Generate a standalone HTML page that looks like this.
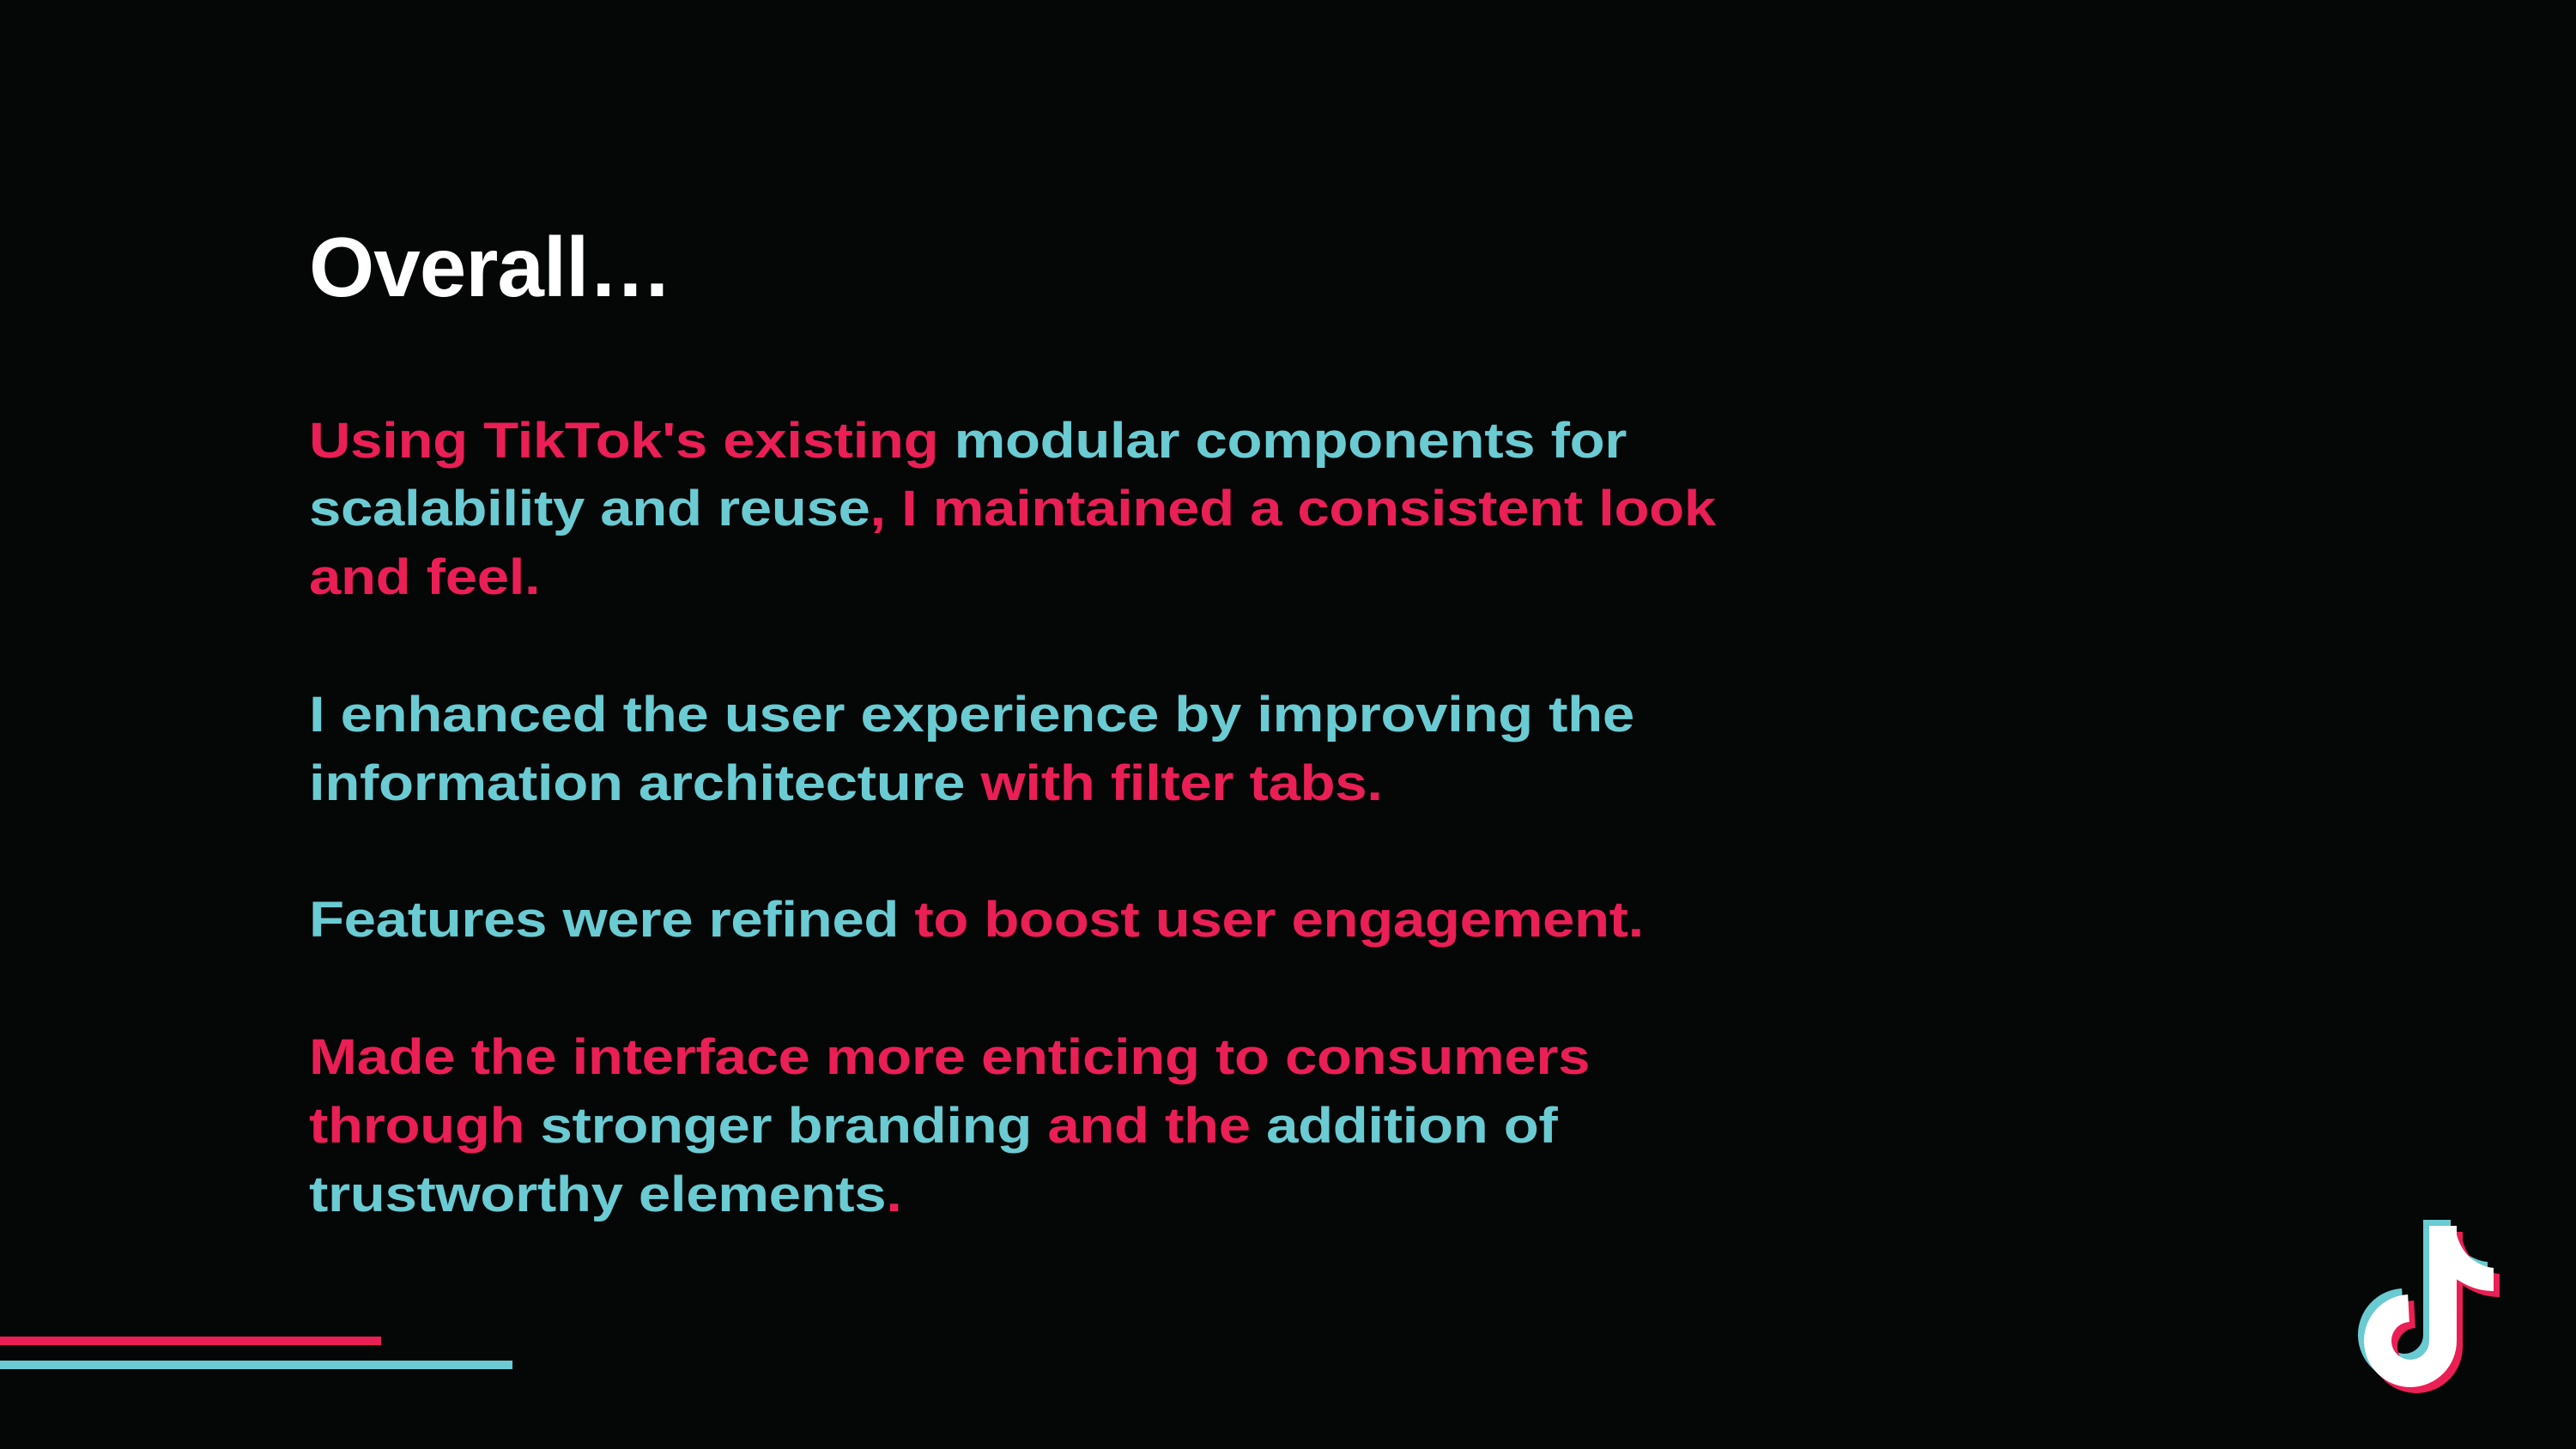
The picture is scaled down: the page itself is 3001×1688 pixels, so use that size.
<!DOCTYPE html>
<html><head><meta charset="utf-8"><style>
html,body{margin:0;padding:0;background:#050606;}
body{width:3001px;height:1688px;position:relative;overflow:hidden;font-family:"Liberation Sans",Arial,sans-serif;font-weight:bold;}
.t{position:absolute;left:360px;white-space:nowrap;line-height:1;transform-origin:0 0;}
.h{font-size:98px;color:#fff;top:262px;letter-spacing:-1px;}
.l{font-size:58px;letter-spacing:-0.3px;transform:scaleX(1.158);}
.p{color:#ea1f55}.c{color:#6acbd2}
</style></head><body>
<div class="t h">Overall…</div>
<div class="t l" style="top:485px"><span class="p">Using TikTok's existing</span> <span class="c">modular components for</span></div>
<div class="t l" style="top:564px"><span class="c">scalability and reuse</span><span class="p">, I maintained a consistent look</span></div>
<div class="t l" style="top:644px"><span class="p">and feel.</span></div>
<div class="t l" style="top:804px"><span class="c">I enhanced the user experience by improving the</span></div>
<div class="t l" style="top:884px"><span class="c">information architecture</span> <span class="p">with filter tabs.</span></div>
<div class="t l" style="top:1043px"><span class="c">Features were refined</span> <span class="p">to boost user engagement.</span></div>
<div class="t l" style="top:1203px"><span class="p">Made the interface more enticing to consumers</span></div>
<div class="t l" style="top:1283px"><span class="p">through</span> <span class="c">stronger branding</span> <span class="p">and the</span> <span class="c">addition of</span></div>
<div class="t l" style="top:1363px"><span class="c">trustworthy elements</span><span class="p">.</span></div>
<div style="position:absolute;left:0;top:1557px;width:444px;height:10px;background:#ea1f55"></div>
<div style="position:absolute;left:0;top:1585px;width:597px;height:10px;background:#6acbd2"></div>
<svg style="position:absolute;left:2700px;top:1400px" width="250" height="250" viewBox="0 0 250 250">
<defs><g id="n"><path d="M106,124 A38,38 0 1 0 146,162 L146,28" fill="none" stroke-width="32"/><path d="M160,28 C164,60 185,75 205,77 L205,104 C186,104 172,97 160,89 Z" stroke="none"/></g></defs>
<use href="#n" transform="translate(-7,-7)" stroke="#6acbd2" fill="#6acbd2"/>
<use href="#n" transform="translate(7,7)" stroke="#ea1f55" fill="#ea1f55"/>
<use href="#n" stroke="#ffffff" fill="#ffffff"/>
</svg>
</body></html>
